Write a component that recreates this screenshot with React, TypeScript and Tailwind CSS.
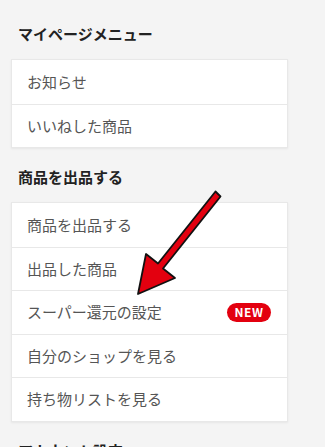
import React from 'react';

type Item = { label: string; badge?: string };

const sections: { title: string; items: Item[] }[] = [
  {
    title: 'マイページメニュー',
    items: [{ label: 'お知らせ' }, { label: 'いいねした商品' }],
  },
  {
    title: '商品を出品する',
    items: [
      { label: '商品を出品する' },
      { label: '出品した商品' },
      { label: 'スーパー還元の設定', badge: 'NEW' },
      { label: '自分のショップを見る' },
      { label: '持ち物リストを見る' },
    ],
  },
  {
    title: 'アカウント設定',
    items: [{ label: '個人情報設定' }],
  },
];

function Arrow() {
  return (
    <svg
      className="pointer-events-none absolute left-0 top-0"
      width="325"
      height="447"
      viewBox="0 0 325 447"
    >
      <polygon
        points="215.5,191.5 158,263.5 146,254 138,294 175,278 163,268.5 220.5,196.5"
        fill="#e3000f"
        stroke="#111"
        strokeWidth="1.8"
        strokeLinejoin="round"
      />
    </svg>
  );
}

export default function App() {
  return (
    <div
      className="relative h-[447px] w-[325px] overflow-hidden bg-[#f4f4f4] px-[11px] pt-[5px]"
      style={{ fontFamily: '"Noto Sans CJK JP", "Noto Sans", sans-serif' }}
    >
      {sections.map((s) => (
        <div key={s.title}>
          <div className="pl-[7px] pb-[16px] pt-[20px] text-[15px] font-bold leading-[18px] text-[#222]">
            {s.title}
          </div>
          <div className="w-[277px] border border-[#e8e8e8] bg-white shadow-[0_1px_2px_rgba(0,0,0,0.06)]">
            {s.items.map((it, i) => (
              <div
                key={it.label}
                className={`flex h-[43.5px] items-center justify-between pl-[15px] pr-[16px] text-[15px] text-[#555] ${
                  i > 0 ? 'border-t border-[#e8e8e8]' : ''
                }`}
              >
                <span>{it.label}</span>
                {it.badge && (
                  <span className="flex h-[19px] w-[44px] items-center justify-center rounded-full bg-[#e3000f] text-[12px] font-bold tracking-[0.5px] text-white">
                    {it.badge}
                  </span>
                )}
              </div>
            ))}
          </div>
        </div>
      ))}
      <Arrow />
    </div>
  );
}
